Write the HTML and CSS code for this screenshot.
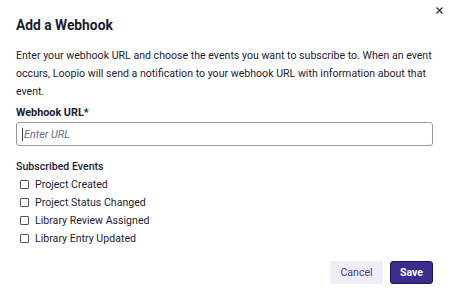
FILE: index.html
```html
<!DOCTYPE html>
<html lang="en">
<head>
    <meta charset="UTF-8">
    <title>Add a Webhook</title>
    <link rel="stylesheet" href="styles.css">
</head>
<body>
    <div class="modal">
        <button type="button" class="close" aria-label="Close">
            <svg width="7" height="7" viewBox="0 0 7 7"><path d="M0.5 0.5 L6.5 6.5 M6.5 0.5 L0.5 6.5" stroke="#2a2838" stroke-width="1.2"/></svg>
        </button>
        <h1 class="title">Add a Webhook</h1>
        <p class="intro">Enter your webhook URL and choose the events you want to subscribe to. When an event occurs, Loopio will send a notification to your webhook URL with information about that event.</p>

        <label class="field-label" for="url">Webhook URL*</label>
        <div class="input-wrap">
            <input class="url-input" id="url" type="text" placeholder="Enter URL">
        </div>

        <div class="events-label">Subscribed Events</div>
        <ul class="events">
            <li><span class="box"></span>Project Created</li>
            <li><span class="box"></span>Project Status Changed</li>
            <li><span class="box"></span>Library Review Assigned</li>
            <li><span class="box"></span>Library Entry Updated</li>
        </ul>

        <div class="actions">
            <button type="button" class="btn-cancel">Cancel</button>
            <button type="button" class="btn-save">Save</button>
        </div>
    </div>
</body>
</html>
```

FILE: styles.css
```css
body {
    margin: 0;
    background: #fff;
    font-family: Roboto, "Liberation Sans", sans-serif;
    color: #1d1b33;
}

.modal {
    position: relative;
    padding: 16px 17px 0 16px;
}

.close {
    position: absolute;
    top: 7px;
    right: 7px;
    border: none;
    background: none;
    padding: 0;
    width: 7px;
    height: 7px;
    line-height: 0;
}

.title {
    margin: 0;
    font-size: 13.8px;
    line-height: 19px;
    font-weight: 700;
}

.intro {
    margin: 12px 0 0;
    font-size: 10.6px;
    line-height: 18px;
}

.field-label {
    display: block;
    margin-top: 5px;
    font-size: 10.8px;
    font-weight: 700;
    line-height: 14px;
}

.input-wrap {
    position: relative;
    margin-top: 2px;
}

/* focused caret */
.input-wrap::before {
    content: "";
    position: absolute;
    left: 6px;
    top: 6px;
    width: 1px;
    height: 13px;
    background: #3c3a4c;
}

.url-input {
    display: block;
    box-sizing: border-box;
    width: 100%;
    height: 24px;
    padding: 0 7px;
    border: 1px solid #9a99a3;
    border-radius: 3px;
    font-family: inherit;
    font-size: 10.8px;
    outline: none;
}

.url-input::placeholder {
    color: #6d6b7d;
    font-style: italic;
}

.events-label {
    margin-top: 14px;
    font-size: 10.6px;
    font-weight: 500;
    line-height: 14px;
}

.events {
    list-style: none;
    margin: 1px 0 0;
    padding: 0 0 0 4px;
}

.events li {
    display: flex;
    align-items: center;
    height: 18px;
    font-size: 10.6px;
}

.box {
    box-sizing: border-box;
    width: 9px;
    height: 9px;
    border: 1px solid #55536a;
    border-radius: 1px;
    margin-right: 6px;
}

.actions {
    display: flex;
    justify-content: flex-end;
    gap: 7px;
    margin-top: 14px;
}

.btn-cancel,
.btn-save {
    height: 23px;
    border-radius: 3px;
    font-family: inherit;
    font-size: 10.6px;
    padding: 0;
}

.btn-cancel {
    width: 53px;
    border: none;
    background: #efedf8;
    color: #463c8c;
}

.btn-save {
    width: 43px;
    border: 1px solid #1f1568;
    background: #3a2d8b;
    color: #fff;
    font-weight: 700;
}
```
